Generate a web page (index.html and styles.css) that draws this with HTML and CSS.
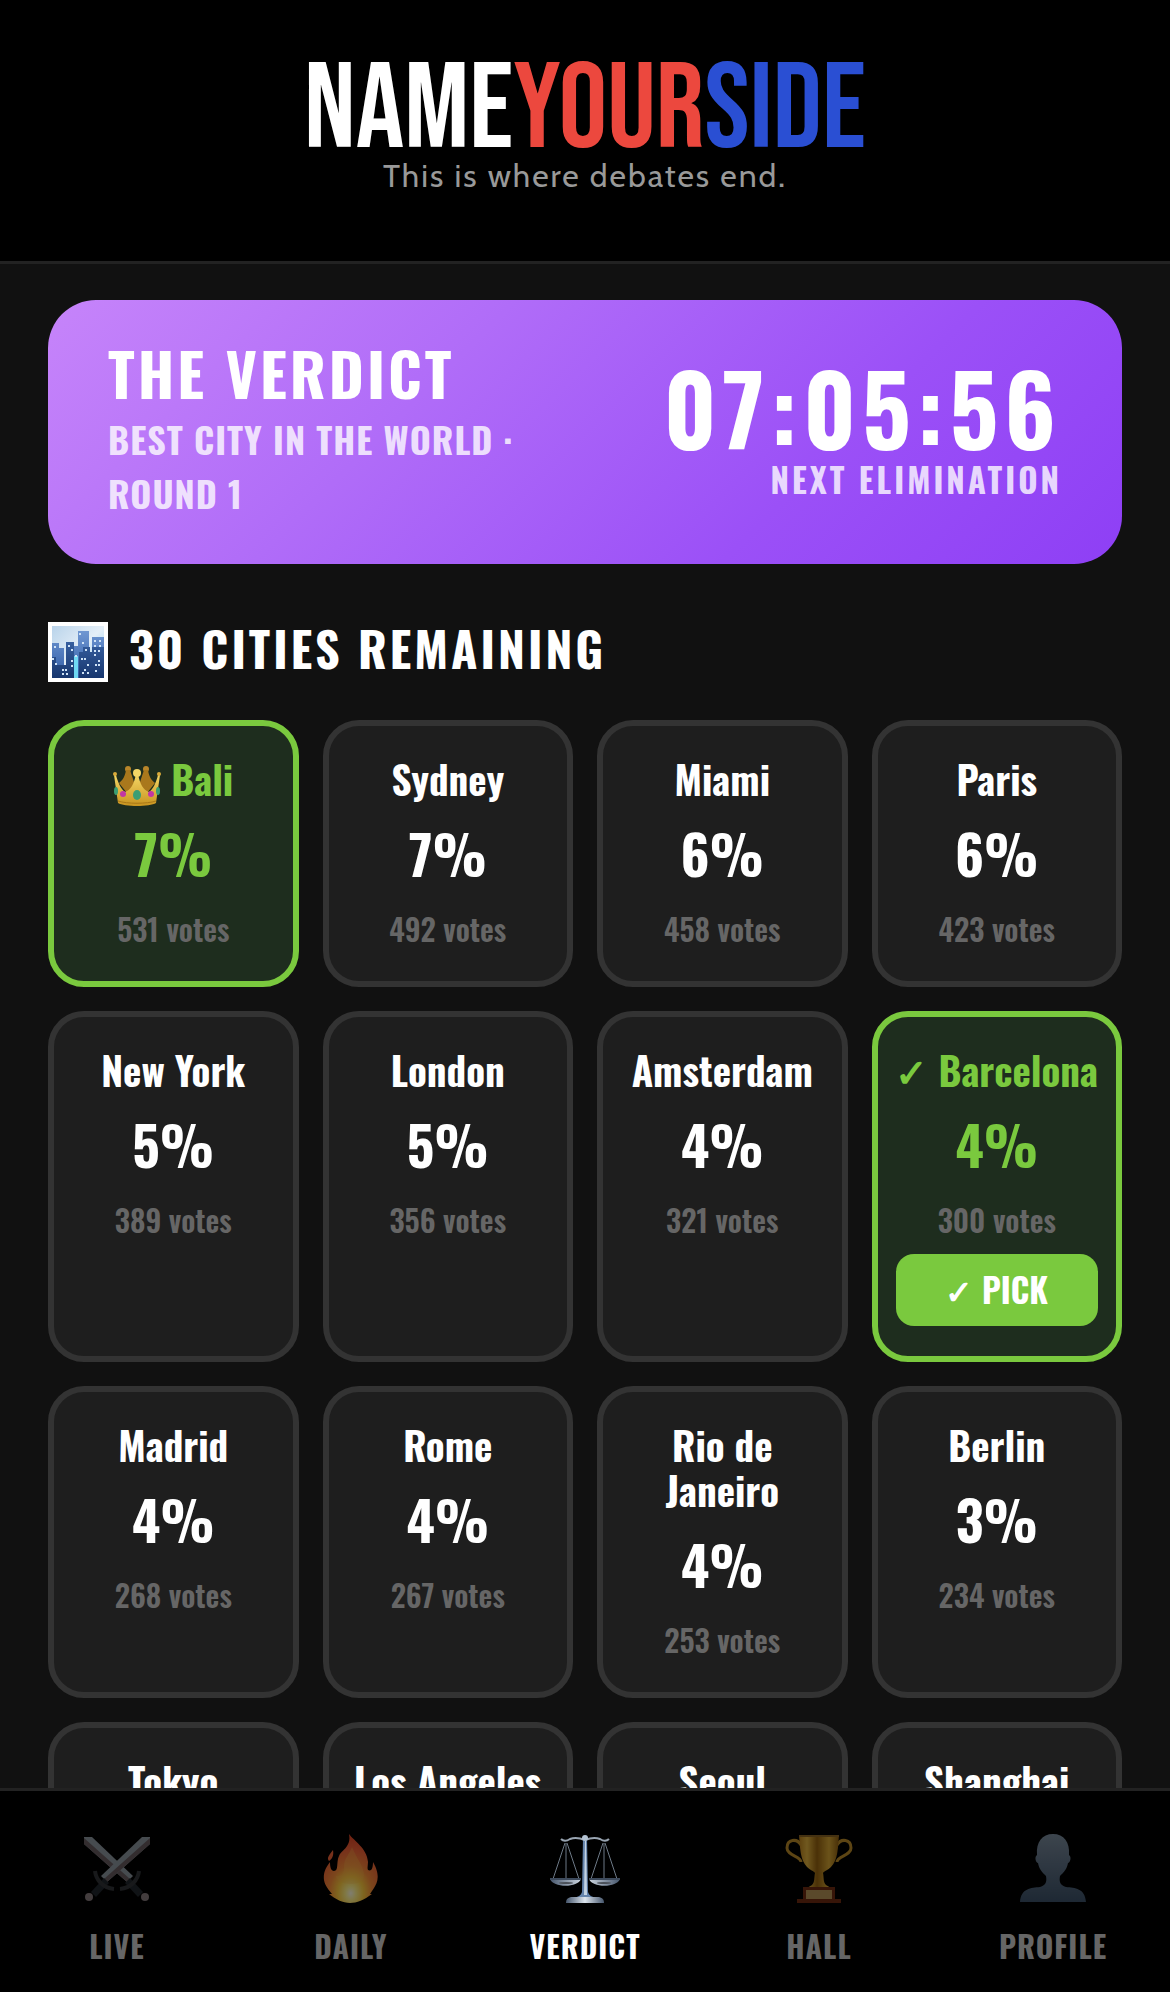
FILE: index.html
```
<!DOCTYPE html>
<html lang="en">

<head>
  <meta charset="UTF-8">
  <meta name="viewport" content="width=device-width, initial-scale=1.0">
  <title>Name Your Side - The Verdict</title>
  <link rel="stylesheet" href="styles.css">
</head>

<body>
  <header class="header">
    <h1 class="logo">NAME<span class="red">YOUR</span><span class="blue">SIDE</span></h1>
    <p class="tagline">This is where debates end.</p>
  </header>

  <main class="main">
    <section class="banner">
      <div class="banner-info">
        <h2>THE VERDICT</h2>
        <p>BEST CITY IN THE WORLD · ROUND 1</p>
      </div>
      <div class="countdown">
        <p class="time">07:05:56</p>
        <p class="label">NEXT ELIMINATION</p>
      </div>
    </section>

    <h2 class="section-title">
      <svg class="city-icon" viewBox="0 0 60 60" aria-hidden="true">
        <defs>
          <linearGradient id="sky" x1="0" y1="0" x2="1" y2="1">
            <stop offset="0" stop-color="#b9d3ea" />
            <stop offset=".5" stop-color="#e4eff8" />
            <stop offset="1" stop-color="#7fc4ea" />
          </linearGradient>
          <linearGradient id="back" x1="0" y1="0" x2="0" y2="1">
            <stop offset="0" stop-color="#6f97d2" />
            <stop offset="1" stop-color="#2f5ba5" />
          </linearGradient>
          <linearGradient id="front" x1="0" y1="0" x2="0" y2="1">
            <stop offset="0" stop-color="#365f9f" />
            <stop offset="1" stop-color="#17366e" />
          </linearGradient>
        </defs>
        <rect width="60" height="60" fill="#fff" />
        <rect x="4" y="4" width="52" height="52" fill="url(#sky)" />
        <path d="M4 21h7v5h5v30H4zM30 9h11v47H30zM44 15h12v41H44zM26 24h4v32h-4z" fill="url(#back)" />
        <path d="M4 35h4v8h5v13H4zM13 43h5V20h8v36H13zM31 30h4v-5h7v5h2v26H31zM44 25h12v31H44z" fill="url(#front)" />
        <path d="M26 34h4v22h-4z" fill="#6fd8f3" />
        <path d="M31 11h2v2h-2zM34 20h2v2h-2zM46 18h2v2h-2zM51 18h2v2h-2zM46 23h2v2h-2zM51 23h2v2h-2zM6 24h2v2H6zM20 23h2v2h-2zM23 27h2v2h-2zM27 33h2v2h-2zM37 27h2v2h-2zM46 28h2v2h-2zM50 28h2v2h-2zM46 32h2v2h-2zM50 38h2v2h-2zM47 42h2v2h-2zM50 42h2v2h-2zM47 48h2v2h-2zM33 36h2v2h-2zM36 36h2v2h-2zM39 42h2v2h-2zM36 47h2v2h-2zM34 50h2v2h-2zM39 50h2v2h-2zM23 38h2v2h-2zM23 43h2v2h-2zM4 36h2v2H4zM7 41h2v2H7zM14 47h2v2h-2zM17 47h2v2h-2zM14 51h2v2h-2zM18 51h2v2h-2z" fill="#cfe3f7" />
      </svg>
      30 CITIES REMAINING
    </h2>

    <ul class="cities">
      <li class="city active">
        <h3>
          <svg class="crown" viewBox="0 0 48 42" role="img" aria-label="Leader">
            <defs>
              <linearGradient id="gold" x1="0" y1="0" x2="0" y2="1">
                <stop offset="0" stop-color="#f5d867" />
                <stop offset="1" stop-color="#c8931f" />
              </linearGradient>
            </defs>
            <circle cx="15" cy="4" r="3" fill="#b9862a" />
            <circle cx="33" cy="4" r="3" fill="#b9862a" />
            <path d="M13 5h4l7 21-10 2-8-10c4-3 6-7 7-13zM35 5h-4l-7 21 10 2 8-10c-4-3-6-7-7-13z" fill="#a9781c" />
            <path d="M1 10h2c2 8 5 14 9 17 6-2 9-8 11-18h2c2 10 5 16 11 18 4-3 7-9 9-17h2l-4 28c-6 4-32 4-38 0z" fill="url(#gold)" />
            <circle cx="24" cy="8" r="4" fill="#f3d666" />
            <circle cx="2" cy="9" r="2" fill="#d9a93a" />
            <circle cx="46" cy="9" r="2" fill="#d9a93a" />
            <path d="M5 36c9 3 29 3 38 0" fill="none" stroke="#a97716" />
            <ellipse cx="24" cy="30" rx="4" ry="5" fill="#3a9e73" />
            <ellipse cx="3" cy="26" rx="2" ry="4" fill="#3a9e73" />
            <ellipse cx="45" cy="26" rx="2" ry="4" fill="#3a9e73" />
            <circle cx="10" cy="29" r="3" fill="#c236a4" />
            <circle cx="38" cy="29" r="3" fill="#c236a4" />
          </svg>
          Bali
        </h3>
        <p class="percent">7%</p>
        <p class="votes">531 votes</p>
      </li>
      <li class="city">
        <h3>Sydney</h3>
        <p class="percent">7%</p>
        <p class="votes">492 votes</p>
      </li>
      <li class="city">
        <h3>Miami</h3>
        <p class="percent">6%</p>
        <p class="votes">458 votes</p>
      </li>
      <li class="city">
        <h3>Paris</h3>
        <p class="percent">6%</p>
        <p class="votes">423 votes</p>
      </li>
      <li class="city">
        <h3>New York</h3>
        <p class="percent">5%</p>
        <p class="votes">389 votes</p>
      </li>
      <li class="city">
        <h3>London</h3>
        <p class="percent">5%</p>
        <p class="votes">356 votes</p>
      </li>
      <li class="city">
        <h3>Amsterdam</h3>
        <p class="percent">4%</p>
        <p class="votes">321 votes</p>
      </li>
      <li class="city active">
        <h3><span>✓</span> Barcelona</h3>
        <p class="percent">4%</p>
        <p class="votes">300 votes</p>
        <button class="pick" type="button">✓ PICK</button>
      </li>
      <li class="city">
        <h3>Madrid</h3>
        <p class="percent">4%</p>
        <p class="votes">268 votes</p>
      </li>
      <li class="city">
        <h3>Rome</h3>
        <p class="percent">4%</p>
        <p class="votes">267 votes</p>
      </li>
      <li class="city">
        <h3>Rio de Janeiro</h3>
        <p class="percent">4%</p>
        <p class="votes">253 votes</p>
      </li>
      <li class="city">
        <h3>Berlin</h3>
        <p class="percent">3%</p>
        <p class="votes">234 votes</p>
      </li>
      <li class="city">
        <h3>Tokyo</h3>
      </li>
      <li class="city">
        <h3>Los Angeles</h3>
      </li>
      <li class="city">
        <h3>Seoul</h3>
      </li>
      <li class="city">
        <h3>Shanghai</h3>
      </li>
    </ul>
  </main>

  <nav class="nav">
    <a href="#live">
      <svg viewBox="0 0 72 72" aria-hidden="true">
        <defs>
          <g id="sword">
            <path d="M3 4h8l41 39-6 6L3 11z" fill="#8b959d" />
            <path d="M3 5v6l43 38 3-3z" fill="#665b5f" />
            <path d="m49 45 13 14-5 5-13-14z" fill="#20262c" />
            <path d="M58 38c-1 9-8 17-19 18" fill="none" stroke="#303336" stroke-width="4" />
            <circle cx="64" cy="64" r="4" fill="#857a7d" />
          </g>
        </defs>
        <use href="#sword" />
        <use href="#sword" transform="matrix(-1 0 0 1 72 0)" />
      </svg>
      <span>LIVE</span>
    </a>
    <a href="#daily">
      <svg viewBox="0 0 72 72" aria-hidden="true">
        <defs>
          <radialGradient id="fire" cx=".5" cy=".86" r=".8">
            <stop offset="0" stop-color="#fffbe0" />
            <stop offset=".12" stop-color="#fff08a" />
            <stop offset=".3" stop-color="#fcc93c" />
            <stop offset=".5" stop-color="#f68a38" />
            <stop offset=".8" stop-color="#ee6136" />
            <stop offset="1" stop-color="#e24a28" />
          </radialGradient>
        </defs>
        <path d="M34 1c5 7 18 14 19 28 0 3-1 6 0 8 4 2 5-3 5-8 8 14 4 21 1 26l-4 6h2c-8 6-15 9-22 9s-15-4-21-9h3c-3-4-7-8-8-14-1-7 2-13 6-18 0 5 1 9 4 9 5 0 2-9 5-15 2-5 6-6 8-10 2-3 3-6 2-12z" fill="url(#fire)" />
        <path d="M18 17c1 6-1 9-4 11-3-3 1-7 4-11z" fill="#ee6337" />
        <path d="M37 14c6 14 12 20 12 28 0 6-5 9-13 9s-15-3-15-8c6 1 8-3 8-9 0-9 5-12 8-20z" fill="#fdb94b" opacity=".3" />
      </svg>
      <span>DAILY</span>
    </a>
    <a href="#verdict" class="current" aria-current="page">
      <svg viewBox="0 0 72 72" aria-hidden="true">
        <defs>
          <linearGradient id="steel" x1="0" y1="0" x2="1" y2="0">
            <stop offset="0" stop-color="#46566c" />
            <stop offset=".5" stop-color="#dde5ee" />
            <stop offset="1" stop-color="#46566c" />
          </linearGradient>
        </defs>
        <path d="M16 10 4 46M17 10v36M18 10l12 36M54 10 42 46M55 10v36M56 10l12 36" fill="none" stroke="#6d7986" stroke-width="1" />
        <path d="M12 6c3 3 6 2 9 0 5-2 10-1 15 1 5-2 10-3 15-1 3 2 6 3 9 0" fill="none" stroke="#98a4b1" stroke-width="2" />
        <path d="M34 5h4l1 54c1 4 5 5 9 6H24c4-1 8-2 9-6z" fill="#6483ab" />
        <path d="M36 8h1l1 54h-3z" fill="#c4d3e3" />
        <circle cx="36" cy="5" r="3" fill="#b4c3d3" />
        <path d="M1 46h31c-3 9-28 9-31 0zM40 46h31c-3 9-28 9-31 0z" fill="url(#steel)" />
        <path d="M1 46h31M40 46h31" stroke="#3d4a5c" stroke-width="2" />
        <ellipse cx="17" cy="50" rx="7" ry="1" fill="#4b5058" />
        <ellipse cx="55" cy="50" rx="7" ry="1" fill="#4b5058" />
        <path d="M22 64h28c4 1 5 3 5 6H17c0-3 1-5 5-6z" fill="url(#steel)" />
      </svg>
      <span>VERDICT</span>
    </a>
    <a href="#hall">
      <svg viewBox="0 0 72 72" aria-hidden="true">
        <defs>
          <linearGradient id="cup" x1="0" y1="0" x2="1" y2="0">
            <stop offset="0" stop-color="#b97f1c" />
            <stop offset=".2" stop-color="#e0b13e" />
            <stop offset=".45" stop-color="#94620f" />
            <stop offset=".75" stop-color="#d6a534" />
            <stop offset="1" stop-color="#8f5f10" />
          </linearGradient>
        </defs>
        <path d="M18 12C14 5 4 6 4 15c0 8 14 8 14 14M54 12c4-7 14-6 14 3 0 8-14 8-14 14" fill="none" stroke="#b98a28" stroke-width="3" />
        <path d="M16 2h40c-1 12-1 25-8 32-3 3-7 4-8 6 1 4 0 9 3 12l5 3H24l5-3c3-3 2-8 3-12-1-2-5-3-8-6C17 27 17 14 16 2z" fill="url(#cup)" />
        <path d="M16 3h40" stroke="#8a6524" stroke-width="2" />
        <path d="M20 54h32v12h6v4H14v-4h6z" fill="#6f2a10" />
        <path d="M23 57h26v9H23z" fill="#b39257" />
      </svg>
      <span>HALL</span>
    </a>
    <a href="#profile">
      <svg viewBox="0 0 72 72" aria-hidden="true">
        <defs>
          <linearGradient id="person" x1="0" y1="0" x2="0" y2="1">
            <stop offset="0" stop-color="#7a8a9a" />
            <stop offset="1" stop-color="#3c5168" />
          </linearGradient>
        </defs>
        <path d="M36 1c11 0 17 8 16 21 3 2 1 8-1 8-1 6-4 9-8 13-1 6 0 9 6 11 9 1 19 1 20 15H3c1-14 11-14 20-15 6-2 7-5 6-11-4-4-7-7-8-13-2 0-4-6-1-8C19 9 25 1 36 1z" fill="url(#person)" />
      </svg>
      <span>PROFILE</span>
    </a>
  </nav>
</body>

</html>
```
FILE: styles.css
```
* {
  margin: 0;
  padding: 0;
  box-sizing: border-box;
}

ul {
  list-style: none;
}

body {
  display: flex;
  flex-direction: column;
  height: 100vh;
  font-family: Oswald, "Roboto Condensed", "Liberation Sans", sans-serif;
  font-weight: 700;
  color: #fff;
  background-color: #111;
}

.header {
  flex: none;
  padding: 64px 48px 67px;
  text-align: center;
  background-color: #000;
  border-bottom: 3px solid #222;
}

.logo {
  font-family: "Bebas Neue", Oswald, "Roboto Condensed", sans-serif;
  font-size: 121px;
  font-weight: 400;
  line-height: 94px;
}

.logo .red {
  color: #ec483e;
}

.logo .blue {
  color: #2a4fd3;
}

.tagline {
  font-family: Cabin, Carlito, "Open Sans", sans-serif;
  font-size: 32px;
  font-weight: 400;
  line-height: 36px;
  letter-spacing: 2px;
  color: #999;
}

.main {
  flex: 1;
  min-height: 0;
  padding: 36px 48px;
  overflow-y: auto;
  scrollbar-width: none;
}

.banner {
  display: flex;
  justify-content: space-between;
  align-items: center;
  gap: 48px;
  padding: 42px 60px;
  border-radius: 48px;
  background: linear-gradient(135deg, #c684fa, #b06cf8 35%, #9b50f7 70%, #8e3ff5);
}

.banner-info {
  flex: 1;
  max-width: 480px;
}

.banner h2 {
  margin-bottom: 10px;
  font-size: 60px;
  line-height: 60px;
  letter-spacing: 3px;
}

.banner-info p {
  margin-bottom: 2px;
  font-size: 36px;
  line-height: 54px;
  letter-spacing: 1px;
  color: rgba(255, 255, 255, .8);
}

.countdown {
  text-align: right;
}

.countdown .time {
  font-size: 96px;
  line-height: 96px;
  letter-spacing: 6px;
}

.countdown .label {
  font-size: 33px;
  line-height: 50px;
  letter-spacing: 3px;
  color: rgba(255, 255, 255, .8);
}

.section-title {
  display: flex;
  align-items: flex-end;
  gap: 21px;
  margin: 48px 0 36px;
  font-size: 48px;
  line-height: 72px;
  letter-spacing: 3px;
}

.city-icon {
  width: 60px;
  height: 60px;
  margin-bottom: 2px;
}

.cities {
  display: grid;
  grid-template-columns: repeat(4, minmax(0, 1fr));
  gap: 24px;
}

.city {
  padding: 30px 18px;
  text-align: center;
  border: 6px solid #333;
  border-radius: 36px;
  background-color: #1e1e1e;
}

.city h3 {
  font-size: 39px;
  line-height: 45px;
}

.city.active {
  border-color: #7ac93e;
  background-color: #1e2d1e;
}

.active h3,
.active .percent {
  color: #7ac93e;
}

.active h3 {
  display: flex;
  justify-content: center;
  gap: 10px;
}

.crown {
  width: 48px;
  height: 42px;
  margin: 9px 0 -6px;
}

.percent {
  margin: 12px 0;
  font-size: 54px;
  line-height: 81px;
}

.votes {
  font-size: 30px;
  font-weight: 600;
  line-height: 45px;
  color: #666;
}

.pick {
  display: block;
  width: 100%;
  height: 72px;
  margin-top: 12px;
  font: inherit;
  font-size: 33px;
  line-height: 48px;
  color: #fff;
  border: 0;
  border-radius: 18px;
  background-color: #7ac93e;
  cursor: pointer;
}

.nav {
  flex: none;
  display: flex;
  padding: 42px 0 24px;
  background-color: #000;
  border-top: 3px solid #222;
}

.nav a {
  flex: 1;
  display: flex;
  flex-direction: column;
  align-items: center;
  gap: 18px;
  font-size: 30px;
  line-height: 45px;
  letter-spacing: 1px;
  text-decoration: none;
  color: #666;
}

.nav svg {
  width: 72px;
  height: 72px;
  opacity: .5;
}

.nav .current {
  color: #fff;
}

.nav .current svg {
  opacity: 1;
}
```
